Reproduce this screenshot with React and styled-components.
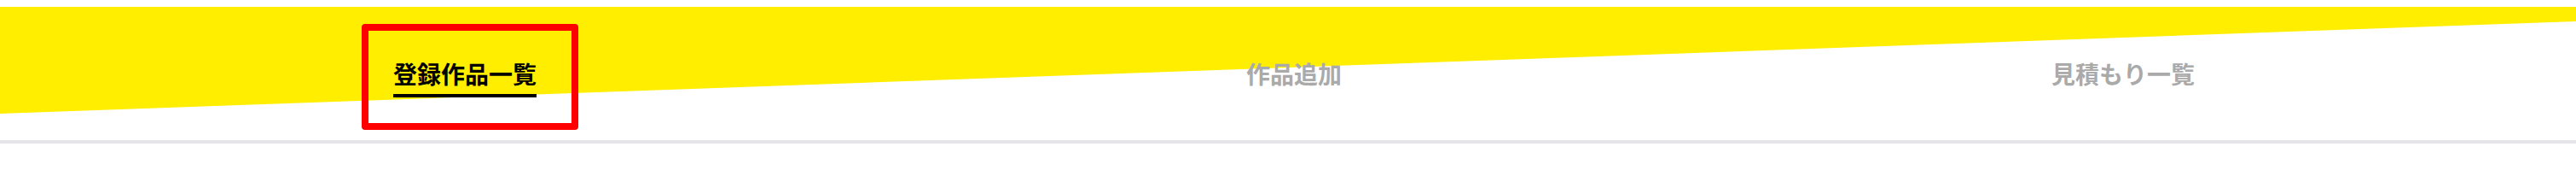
import React from "react";
import styled, { createGlobalStyle } from "styled-components";

const GlobalStyle = createGlobalStyle`
  body {
    margin: 0;
    background: #fff;
    font-family: "Noto Sans CJK JP", "Noto Sans", sans-serif;
  }
`;

const Page = styled.div`
  padding-top: 8px;
  width: 3020px;
  height: 212px;
  background: #fff;
`;

const Header = styled.header`
  position: relative;
  height: 156px;

  /* slanted yellow band behind the tabs */
  &::before {
    content: "";
    position: absolute;
    top: 0;
    left: 0;
    right: 0;
    height: 125px;
    background: #ffee00;
    clip-path: polygon(0 0, 100% 0, 100% 17px, 0 100%);
  }
`;

const TabNav = styled.nav`
  position: relative;
  display: grid;
  grid-template-columns: repeat(3, 972px);
  padding: 58px 0 0 59px;
`;

const Tab = styled.div`
  justify-self: center;
  position: relative;
`;

const TabLabel = styled.span`
  display: inline-block;
  font-size: 28px;
  font-weight: 700;
  line-height: 40px;
  padding-bottom: 4px;
  color: ${(p) => (p.$active ? "#000" : "#aaaaaa")};
  border-bottom: 4px solid ${(p) => (p.$active ? "#000" : "transparent")};
  white-space: nowrap;
`;

const Highlight = styled.div`
  position: absolute;
  left: -37px;
  top: -38px;
  width: 254px;
  height: 124px;
  box-sizing: border-box;
  border: 8px solid #ff0000;
  border-radius: 4px;
  pointer-events: none;
`;

const Divider = styled.div`
  height: 4px;
  background: #e6e5ea;
`;

const tabs = ["登録作品一覧", "作品追加", "見積もり一覧"];

const App = () => {
  return (
    <Page>
      <GlobalStyle />
      <Header>
        <TabNav>
          {tabs.map((label, i) => (
            <Tab key={label}>
              <TabLabel $active={i === 0}>{label}</TabLabel>
              {i === 0 && <Highlight />}
            </Tab>
          ))}
        </TabNav>
      </Header>
      <Divider />
    </Page>
  );
};

export default App;
